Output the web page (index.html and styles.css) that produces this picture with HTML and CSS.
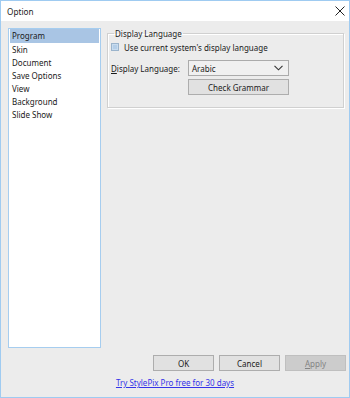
FILE: index.html
```html
<!DOCTYPE html>
<html lang="en">
<head>
    <meta charset="UTF-8">
    <title>Option</title>
    <link rel="stylesheet" href="styles.css">
</head>
<body>

    <div class="window">
        <div class="titlebar">
            <span class="title">Option</span>
            <svg class="close" width="10" height="10" viewBox="0 0 10 10">
                <path d="M0.5 0.5 L9.5 9.5 M9.5 0.5 L0.5 9.5" stroke="#222" stroke-width="1" fill="none"/>
            </svg>
        </div>

        <div class="main">
            <ul class="pages">
                <li class="selected">Program</li>
                <li>Skin</li>
                <li>Document</li>
                <li>Save Options</li>
                <li>View</li>
                <li>Background</li>
                <li>Slide Show</li>
            </ul>

            <div class="panel">
                <fieldset class="group">
                    <legend>Display Language</legend>
                    <div class="check-row">
                        <span class="checkbox"></span>
                        <span>Use current system's display language</span>
                    </div>
                    <div class="lang-row">
                        <span class="label"><u>D</u>isplay Language:</span>
                        <div class="controls">
                            <div class="combo">
                                <span>Arabic</span>
                                <svg width="9" height="6" viewBox="0 0 9 6">
                                    <path d="M0.5 0.8 L4.5 4.8 L8.5 0.8" stroke="#333" stroke-width="1.1" fill="none"/>
                                </svg>
                            </div>
                            <div class="btn wide">Check Grammar</div>
                        </div>
                    </div>
                </fieldset>
            </div>
        </div>

        <div class="buttons">
            <div class="btn">OK</div>
            <div class="btn">Cancel</div>
            <div class="btn disabled"><u>A</u>pply</div>
        </div>

        <div class="footer">
            <a href="#">Try StylePix Pro free for 30 days</a>
        </div>
    </div>

</body>
</html>
```

FILE: styles.css
```css
body {
    margin: 0;
    font-family: "Noto Sans", "Open Sans", sans-serif;
    font-size: 8px;
    color: #1a1a1a;
}

.window {
    box-sizing: border-box;
    width: 350px;
    height: 398px;
    border: 1px solid #9fcbf1;
    background: #ececec;
    display: flex;
    flex-direction: column;
}

.titlebar {
    height: 20px;
    background: #fff;
    display: flex;
    align-items: center;
    justify-content: space-between;
    padding: 0 4px 0 6px;
}

.title {
    font-size: 8.2px;
    color: #222;
}

.main {
    display: flex;
    gap: 6px;
    padding: 7px 5px 0 7px;
}

.pages {
    list-style: none;
    margin: 0;
    padding: 0 1px;
    width: 89px;
    height: 318px;
    background: #fff;
    border: 1px solid #a6cdef;
}

.pages li {
    height: 13px;
    line-height: 13px;
    padding-left: 2px;
}

.pages li.selected {
    height: 14px;
    line-height: 14px;
    background: #a9c5e4;
}

.panel {
    flex: 1;
}

.group {
    margin: 0;
    padding: 2px 5px 12px 3px;
    border: 1px solid #d0d0d0;
    box-shadow: inset 1px 1px 0 #fff, 1px 1px 0 #fff;
}

.group legend {
    padding: 0 1px;
    margin-left: 3px;
    color: #222;
}

.check-row {
    display: flex;
    align-items: center;
    gap: 5px;
    height: 12px;
}

.checkbox {
    box-sizing: border-box;
    width: 8px;
    height: 8px;
    border: 1px solid #9bb4cc;
    background: #b4cee8;
    box-shadow: inset 0 0 0 1px #c8dcef;
}

.lang-row {
    display: flex;
    margin-top: 7px;
}

.label {
    width: 77px;
    white-space: nowrap;
    padding-top: 3px;
}

.controls {
    display: flex;
    flex-direction: column;
    gap: 3px;
    width: 101px;
}

.combo {
    box-sizing: border-box;
    height: 16px;
    border: 1px solid #ababab;
    background: #f0f0f0;
    display: flex;
    align-items: center;
    justify-content: space-between;
    padding: 0 5px 0 3px;
}

.btn {
    box-sizing: border-box;
    height: 16px;
    border: 1px solid #adadad;
    background: #e1e1e1;
    display: flex;
    align-items: center;
    justify-content: center;
}

.buttons {
    display: flex;
    justify-content: flex-end;
    gap: 5px;
    padding: 7px 3px 0 0;
}

.buttons .btn {
    width: 61px;
}

.btn.disabled {
    background: #cccccc;
    border-color: #bfbfbf;
    color: #838383;
}

.footer {
    text-align: center;
    padding-top: 6px;
}

.footer a {
    color: #3434e8;
}
```
